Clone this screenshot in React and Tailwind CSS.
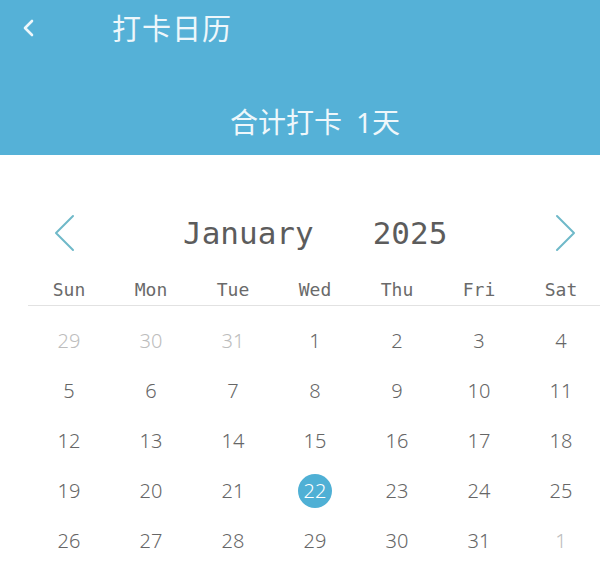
import React from "react";

const weeks = [
  [[29, true], [30, true], [31, true], [1], [2], [3], [4]],
  [[5], [6], [7], [8], [9], [10], [11]],
  [[12], [13], [14], [15], [16], [17], [18]],
  [[19], [20], [21], [22], [23], [24], [25]],
  [[26], [27], [28], [29], [30], [31], [1, true]],
];

const dayNames = ["Sun", "Mon", "Tue", "Wed", "Thu", "Fri", "Sat"];

function Chevron({ dir }) {
  return (
    <svg width="24" height="38" viewBox="0 0 24 38" fill="none">
      <path
        d={dir === "left" ? "M21 2L4 19l17 17" : "M3 2l17 17L3 36"}
        stroke="#6fb9c9"
        strokeWidth="2"
        strokeLinecap="round"
        strokeLinejoin="round"
      />
    </svg>
  );
}

export default function App() {
  return (
    <div className="w-[600px] h-[563px] bg-white overflow-hidden font-['Noto_Sans','Noto_Sans_CJK_SC',sans-serif]">
      {/* header */}
      <div className="h-[155px] bg-[#55b1d7] text-[#eef7fb] flex flex-col">
        <div className="h-[56px] flex items-center">
          <div className="w-[112px] pl-[20px] flex items-center">
            <svg width="16" height="20" viewBox="0 0 16 20" fill="none">
              <path d="M12 3L5 10l7 7" stroke="#eef7fb" strokeWidth="2.6" strokeLinecap="round" strokeLinejoin="round" />
            </svg>
          </div>
          <span className="text-[29px] leading-none tracking-[1px]">打卡日历</span>
        </div>
        <div className="flex-1 flex items-center justify-center pl-[30px] pt-[32px]">
          <span className="text-[28px] leading-none">
            合计打卡<span className="ml-[14px]">1天</span>
          </span>
        </div>
      </div>

      {/* month nav */}
      <div className="flex items-center h-[80px] pt-[38px] box-content">
        <div className="pl-[52px] flex items-center">
          <Chevron dir="left" />
        </div>
        <div className="ml-[107px] flex items-center font-['DejaVu_Sans_Mono',monospace] text-[31px] text-[#5c5c5c] leading-none">
          <span>January</span>
          <span className="ml-[59px]">2025</span>
        </div>
        <div className="ml-auto pr-[22px] flex items-center">
          <Chevron dir="right" />
        </div>
      </div>

      {/* calendar */}
      <div className="ml-[28px] w-[574px]">
        <div className="grid grid-cols-7 h-[33px] border-b border-[#e2e2e2] font-['DejaVu_Sans_Mono',monospace] text-[18px] text-[#6a6a6a]">
          {dayNames.map((d) => (
            <div key={d} className="flex items-center justify-center">
              {d}
            </div>
          ))}
        </div>
        <div className="pt-[10px]">
          {weeks.map((w, i) => (
            <div key={i} className="grid grid-cols-7 h-[50px]">
              {w.map(([n, other], j) => {
                const sel = n === 22 && !other;
                return (
                  <div key={j} className="flex items-center justify-center">
                    <span
                      className={
                        sel
                          ? "w-[34px] h-[34px] rounded-full bg-[#4fb0d5] text-white flex items-center justify-center text-[20px] font-light"
                          : "text-[20px] font-light " + (other ? "text-[#bdbdbd]" : "text-[#666]")
                      }
                    >
                      {n}
                    </span>
                  </div>
                );
              })}
            </div>
          ))}
        </div>
      </div>
    </div>
  );
}
